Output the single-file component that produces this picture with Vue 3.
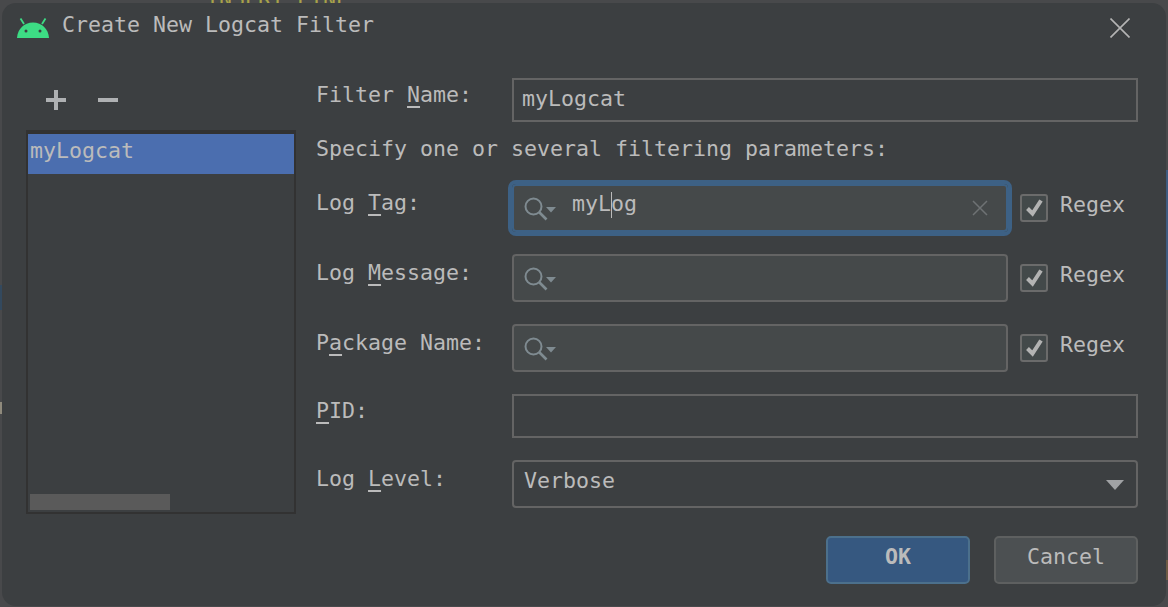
<template>
  <div class="backdrop">
    <span class="peek">INSERT LINE</span>
    <i class="edge right-blue"></i>
    <i class="edge right-gray"></i>
    <i class="edge right-amber"></i>
    <i class="edge left-blue"></i>
    <i class="edge left-tan"></i>
    <div class="dialog">
      <header class="titlebar">
        <svg class="android" width="34" height="22" viewBox="0 0 34 22">
          <path d="M8 7 4.500 1.500M26 7l3.500-5.500" stroke="#3ddc84" stroke-width="1.800" fill="none" />
          <path d="M1 21C1.500 12 8 5.500 17 5.500S32.500 12 33 21Z" fill="#3ddc84" />
          <circle cx="10" cy="14" r="1.500" fill="#3c3f41" />
          <circle cx="24" cy="14" r="1.500" fill="#3c3f41" />
        </svg>
        <span class="title">Create New Logcat Filter</span>
        <svg class="close" width="20" height="20" viewBox="0 0 20 20">
          <path d="M0.500 0.500 19.500 19.500M19.500 0.500 0.500 19.500" stroke="#b4b4b4" stroke-width="1.600" />
        </svg>
      </header>

      <div class="body">
        <aside class="side">
          <div class="toolbar">
            <svg width="20" height="20" viewBox="0 0 20 20">
              <path d="M0 10H20M10 0V20" stroke="#afb1b3" stroke-width="4" />
            </svg>
            <svg width="20" height="20" viewBox="0 0 20 20">
              <path d="M0 10H20" stroke="#afb1b3" stroke-width="4" />
            </svg>
          </div>
          <div class="list">
            <div class="list-item">myLogcat</div>
            <div class="scrollbar"></div>
          </div>
        </aside>

        <main class="form">
          <div class="row name-row">
            <label>Filter <u>N</u>ame:</label>
            <div class="plain-input">myLogcat</div>
          </div>
          <p class="hint">Specify one or several filtering parameters:</p>

          <div v-for="row in searchRows" :key="row.label" class="row search-row">
            <label>{{ row.before }}<u>{{ row.key }}</u>{{ row.after }}</label>
            <div class="search-wrap">
              <div class="search" :class="{ focused: row.value }">
                <svg class="lens" width="34" height="26" viewBox="0 0 34 26">
                  <circle cx="9.500" cy="10.500" r="8" fill="none" stroke="#7f8b91" stroke-width="2" />
                  <path d="M15 16 22.500 23.500" stroke="#7f8b91" stroke-width="2.600" />
                  <path d="M22 11h10l-5 5.500Z" fill="#7f8b91" />
                </svg>
                <span v-if="row.value" class="query">myL<i class="caret"></i>og</span>
                <svg v-if="row.value" class="clear" width="16" height="16" viewBox="0 0 16 16">
                  <path d="M1 1 15 15M15 1 1 15" stroke="#6e7274" stroke-width="1.500" />
                </svg>
              </div>
              <span class="check">
                <svg width="24" height="24" viewBox="0 0 24 24">
                  <path d="M5.500 12.500 10.500 17.500 19 4.500" fill="none" stroke="#b3b3b3" stroke-width="4" />
                </svg>
              </span>
              <span class="regex">Regex</span>
            </div>
          </div>

          <div class="row pid-row">
            <label><u>P</u>ID:</label>
            <div class="plain-input"></div>
          </div>

          <div class="row level-row">
            <label>Log <u>L</u>evel:</label>
            <div class="select">
              <span>Verbose</span>
              <i class="arrow"></i>
            </div>
          </div>

          <div class="actions">
            <button class="btn primary">OK</button>
            <button class="btn">Cancel</button>
          </div>
        </main>
      </div>
    </div>
  </div>
</template>

<script setup>
const searchRows = [
  { label: "tag", before: "Log ", key: "T", after: "ag:", value: "myLog" },
  { label: "message", before: "Log ", key: "M", after: "essage:", value: "" },
  { label: "package", before: "P", key: "a", after: "ckage Name:", value: "" },
];
</script>

<style>
html,
body {
  margin: 0;
  background: #3a3c3e;
}
</style>

<style scoped>
.backdrop {
  position: relative;
  width: 1168px;
  height: 607px;
  overflow: hidden;
  background: #48494b;
  font-family: "DejaVu Sans Mono", "Liberation Mono", monospace;
  font-size: 21.6px;
  color: #bbbbbb;
}

/* bits of the IDE window that show round the dialog */
.peek {
  position: absolute;
  left: 206px;
  top: -14px;
  color: #a8a24a;
}

.edge {
  position: absolute;
  width: 2px;
}

.right-blue {
  right: 0;
  top: 170px;
  height: 120px;
  background: #3f5b80;
}

.right-gray {
  right: 0;
  top: 290px;
  height: 210px;
  background: #565758;
}

.right-amber {
  right: 0;
  top: 560px;
  height: 20px;
  background: #6e5a44;
}

.left-blue {
  left: 0;
  top: 285px;
  height: 25px;
  background: #33495e;
}

.left-tan {
  left: 0;
  top: 402px;
  height: 12px;
  background: #8f8a7c;
}

.dialog {
  position: relative;
  box-sizing: border-box;
  width: 1164px;
  height: 603px;
  margin-left: 2px;
  top: 3px;
  background: #3c3f41;
  border-radius: 14px;
}

.titlebar {
  display: flex;
  align-items: center;
  height: 45px;
  padding: 0 36px 0 14px;
}

.android {
  margin-top: 4px;
  margin-right: 12px;
}

.title {
  flex: 1;
  margin-top: -2px;
  line-height: 45px;
}

.close {
  margin-top: 5px;
}

.body {
  display: flex;
  padding: 0 28px 0 24px;
}

.side {
  width: 270px;
  margin-right: 20px;
}

.toolbar {
  display: flex;
  gap: 32px;
  height: 82px;
  padding-left: 20px;
  box-sizing: border-box;
  padding-top: 42px;
}

.list {
  position: relative;
  box-sizing: border-box;
  height: 384px;
  border: 2px solid #323232;
  border-top-width: 4px;
}

.list-item {
  height: 40px;
  padding-left: 2px;
  line-height: 34px;
  background: #4b6eaf;
}

.scrollbar {
  position: absolute;
  left: 2px;
  bottom: 2px;
  width: 140px;
  height: 16px;
  background: #5a5a5a;
}

.form {
  flex: 1;
  padding-top: 30px;
}

.row {
  display: grid;
  grid-template-columns: 196px 1fr;
}

.row label {
  line-height: 34px;
}

.search-row label {
  padding-top: 2px;
}

.level-row label {
  padding-top: 2px;
}

.plain-input {
  box-sizing: border-box;
  height: 44px;
  padding-left: 8px;
  border: 2px solid #646464;
  line-height: 38px;
}

.hint {
  margin: 10px 0 18px;
  line-height: 34px;
}

.search-row {
  height: 48px;
  margin-bottom: 22px;
}

.search-wrap {
  display: flex;
  align-items: center;
}

.search {
  position: relative;
  box-sizing: border-box;
  display: flex;
  align-items: center;
  width: 496px;
  height: 48px;
  padding-left: 10px;
  border: 2px solid #646464;
  border-radius: 4px;
  background: #45494a;
}

.search.focused {
  outline: 4px solid #3d6185;
  outline-offset: 0;
  border-color: #3d6185;
}

.lens {
  flex: none;
  margin-top: 2px;
}

.query {
  margin-left: 14px;
  margin-top: -8px;
}

.caret {
  display: inline-block;
  width: 1px;
  height: 26px;
  margin: 0 -1px 0 0;
  vertical-align: -7px;
  background: #bbbbbb;
}

.clear {
  position: absolute;
  right: 18px;
  top: 14px;
}

.check {
  box-sizing: border-box;
  display: flex;
  align-items: center;
  justify-content: center;
  width: 28px;
  height: 28px;
  margin-left: 12px;
  border: 2px solid #6b6b6b;
  border-radius: 3px;
  background: #43494a;
}

.regex {
  margin-left: 12px;
  margin-top: -8px;
}

.pid-row {
  margin-bottom: 22px;
}

.select {
  box-sizing: border-box;
  display: flex;
  align-items: center;
  justify-content: space-between;
  height: 48px;
  padding: 0 12px 8px 10px;
  border: 2px solid #646464;
  border-radius: 4px;
}

.arrow {
  width: 0;
  height: 0;
  margin-top: 10px;
  border-left: 9px solid transparent;
  border-right: 9px solid transparent;
  border-top: 10px solid #a0a2a4;
}

.actions {
  display: flex;
  justify-content: flex-end;
  gap: 24px;
  margin-top: 28px;
}

.btn {
  box-sizing: border-box;
  width: 144px;
  height: 48px;
  padding: 0 0 8px;
  border: 2px solid #5e6060;
  border-radius: 5px;
  background: #4c5052;
  color: #bbbbbb;
  font: inherit;
}

.btn.primary {
  border-color: #4c708c;
  background: #365880;
  font-weight: 700;
}

u {
  text-underline-offset: 4px;
}
</style>
